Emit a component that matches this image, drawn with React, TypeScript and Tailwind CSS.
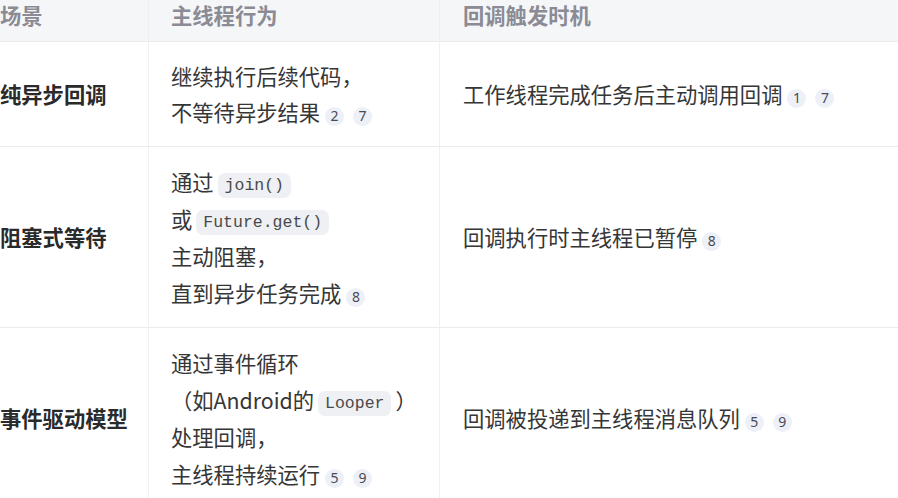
import React from "react";

const Badge = ({ n }: { n: string }) => (
  <span className="ml-[5px] inline-flex h-[19px] w-[19px] items-center justify-center rounded-full bg-[#eef0f7] align-[-3px] text-[14px] leading-none text-[#4a4a55] [font-family:'Noto_Sans',sans-serif]">
    {n}
  </span>
);

const Badges = ({ list }: { list: string[] }) => (
  <span className="inline-flex gap-[4px]">
    {list.map((n) => (
      <Badge key={n} n={n} />
    ))}
  </span>
);

const Code = ({ children }: { children: React.ReactNode }) => (
  <code className="mx-[4px] inline-block rounded-[7px] bg-[#eef0f3] px-[7px] align-[1px] text-[16.5px] leading-[25px] text-[#4a4a4a] [font-family:'Liberation_Mono',monospace]">
    {children}
  </code>
);

export default function App() {
  const cell1 = "flex items-center border-r border-[#f0f0f2] pl-[22px] pr-[16px] text-[21.3px] font-bold text-[#2a2a2a]";
  const cell2 = "border-r border-[#f0f0f2] px-[22px] py-[16px] text-[21.3px] text-[#363636]";
  const cell3 = "flex items-center px-[23px] text-[21.3px] text-[#363636]";
  return (
    <div className="h-[498px] w-[898px] overflow-hidden bg-white [font-family:'Noto_Sans_CJK_SC','Noto_Sans',sans-serif]">
      <div className="-ml-[22px] grid w-[920px] grid-cols-[171px_291px_1fr]">
        {/* header */}
        <div className="h-[42px] border-b border-r border-[#ebebef] border-r-[#f0f0f2] bg-[#f5f6f8] pl-[22px] text-[21.3px] font-bold leading-[29px] text-[#8a8b94]">场景</div>
        <div className="h-[42px] border-b border-r border-[#ebebef] border-r-[#f0f0f2] bg-[#f5f6f8] px-[22px] text-[21.3px] font-bold leading-[29px] text-[#8a8b94]">主线程行为</div>
        <div className="h-[42px] border-b border-[#ebebef] bg-[#f5f6f8] px-[23px] text-[21.3px] font-bold leading-[29px] text-[#8a8b94]">回调触发时机</div>

        {/* row 1 */}
        <div className={cell1 + " border-b border-b-[#ebebef]"}>纯异步回调</div>
        <div className={cell2 + " border-b border-b-[#ebebef] leading-[36px]"}>
          <div>继续执行后续代码，</div>
          <div>
            不等待异步结果
            <Badges list={["2", "7"]} />
          </div>
        </div>
        <div className={cell3 + " border-b border-[#ebebef]"}>
          <div>
            工作线程完成任务后主动调用回调
            <Badges list={["1", "7"]} />
          </div>
        </div>

        {/* row 2 */}
        <div className={cell1 + " border-b border-b-[#ebebef]"}>阻塞式等待</div>
        <div className={cell2 + " border-b border-b-[#ebebef] leading-[37px]"}>
          <div>
            通过<Code>join()</Code>
          </div>
          <div>
            或<Code>Future.get()</Code>
          </div>
          <div>主动阻塞，</div>
          <div>
            直到异步任务完成
            <Badges list={["8"]} />
          </div>
        </div>
        <div className={cell3 + " border-b border-[#ebebef]"}>
          <div>
            回调执行时主线程已暂停
            <Badges list={["8"]} />
          </div>
        </div>

        {/* row 3 */}
        <div className={cell1}>事件驱动模型</div>
        <div className={cell2 + " leading-[37px]"}>
          <div>通过事件循环</div>
          <div>
            （如Android的<Code>Looper</Code>）
          </div>
          <div>处理回调，</div>
          <div>
            主线程持续运行
            <Badges list={["5", "9"]} />
          </div>
        </div>
        <div className={cell3}>
          <div>
            回调被投递到主线程消息队列
            <Badges list={["5", "9"]} />
          </div>
        </div>
      </div>
    </div>
  );
}
